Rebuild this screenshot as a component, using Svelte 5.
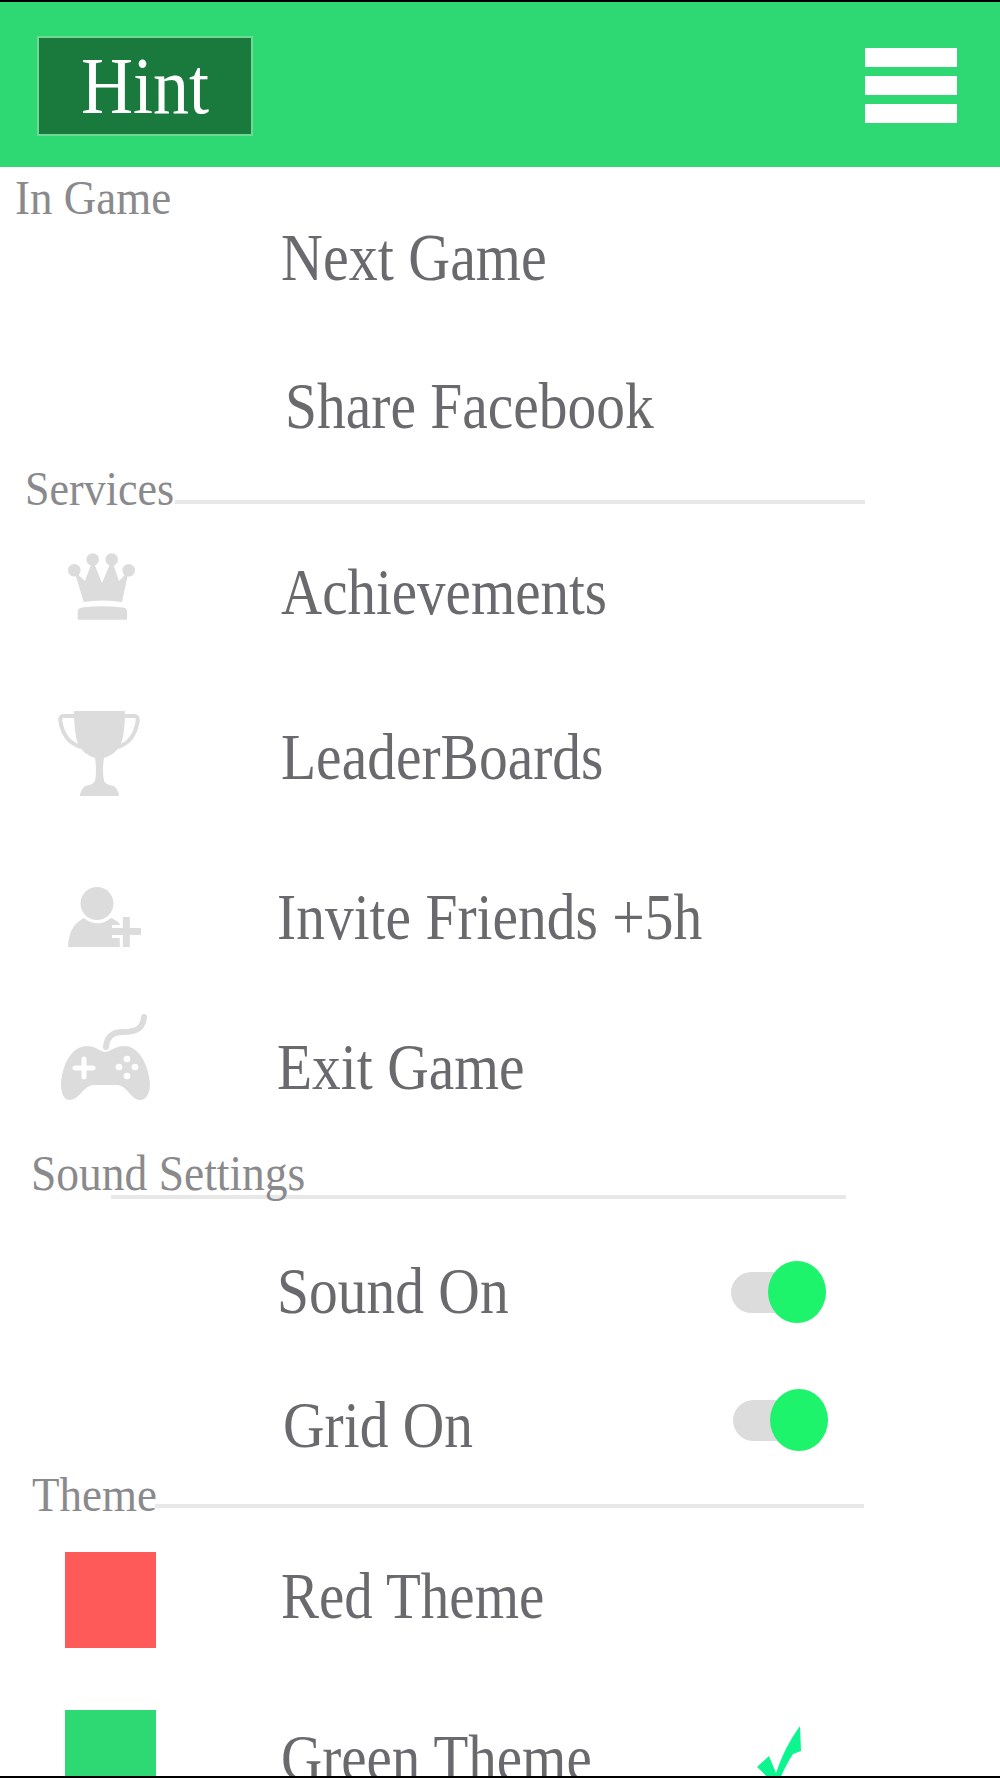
<script>
  const sections = [
    {
      title: 'In Game', h: 62, x: 15,
      rows: [
        { label: 'Next Game', h: 58, dx: 4, size: 58 },
        { label: 'Share Facebook', h: 118, dx: 8, mt: 60 }
      ]
    },
    {
      title: 'Services', h: 50, x: 25, size: 44, rule: { left: 175, width: 690, top: 35 },
      rows: [
        { label: 'Achievements', h: 152, dx: 4, icon: 'crown', size: 57 },
        { label: 'LeaderBoards', h: 180, dx: 4, icon: 'trophy' },
        { label: 'Invite Friends +5h', h: 140, dx: 0, icon: 'invite' },
        { label: 'Exit Game', h: 160, dx: 0, icon: 'pad' }
      ]
    },
    {
      title: 'Sound Settings', h: 52, x: 31, size: 45.500, rule: { left: 111, width: 735, top: 48 },
      rows: [
        { label: 'Sound On', h: 184, dx: 0, toggle: 174, lift: -2 },
        { label: 'Grid On', h: 84, dx: 6, toggle: 172, lift: 9 }
      ]
    },
    {
      title: 'Theme', h: 56, x: 32, rule: { left: 155, width: 709, top: 37 },
      rows: [
        { label: 'Red Theme', h: 144, dx: 4, swatch: 'red', size: 57 },
        { label: 'Green Theme', h: 180, dx: 4, swatch: 'green', checked: true, size: 57 }
      ]
    }
  ];
</script>

<div class="page">
  <header class="topbar">
    <button class="hint"><span>Hint</span></button>
    <div class="burger">
      <span></span>
      <span></span>
      <span></span>
    </div>
  </header>

  {#each sections as section}
    <div class="head" style="height:{section.h}px; padding-left:{section.x}px">
      <span class="head-text" style="font-size:{section.size ?? 45}px">{section.title}</span>
      {#if section.rule}
        <div
          class="rule"
          style="left:{section.rule.left}px; width:{section.rule.width}px; top:{section.rule.top}px"
        ></div>
      {/if}
    </div>

    {#each section.rows as row}
      <div class="row" style="height:{row.h}px; margin-top:{row.mt ?? 0}px">
        <div class="slot">
          {#if row.icon === 'crown'}
            <svg class="icon crown" width="67" height="67" viewBox="0 0 67 67">
              <circle cx="6.300" cy="17.300" r="6.300" />
              <circle cx="24.700" cy="6.500" r="6.300" />
              <circle cx="43.700" cy="6.500" r="6.300" />
              <circle cx="60.700" cy="17.300" r="6.300" />
              <path d="M6.300 18 L17 28 L24.700 7 L34 30 L43.700 7 L51 28 L60.700 18 L54 49 Q34 46 15.700 49 Z" />
              <path d="M9.700 66.700 V58 Q10 55 14 54.500 Q34 52 55 54.500 Q59 55 59 58 V66.700 Z" />
            </svg>
          {:else if row.icon === 'trophy'}
            <svg class="icon trophy" width="82" height="85" viewBox="0 0 82 85">
              <path
                d="M16 0 H67 Q67 22 63 33 Q58 43 46 47 Q44 60 46 70 Q48 74 56 75 Q61 80 61 85 H22 Q22 80 27 75 Q35 74 37 70 Q39 60 37 47 Q25 43 20 33 Q16 22 16 0 Z"
              />
              <path class="line" d="M17 5 H5 Q1.500 5 2.500 11 Q6 31 23 36" />
              <path class="line" d="M66 5 H77 Q80.500 5 79.500 11 Q76 31 60 36" />
            </svg>
          {:else if row.icon === 'invite'}
            <svg class="icon invite" width="73" height="60" viewBox="0 0 73 60">
              <circle cx="29" cy="16.500" r="16.500" />
              <path d="M0 60 C1 44 6 36 16 31 C24 38 35 38 43 31 C48 33 52 36 54 40 V60 Z" />
              <path class="gap" d="M44 44.500 H52 M58.300 32 V60" />
              <path class="plus" d="M44 44.500 H73 M58.300 30 V60" />
            </svg>
          {:else if row.icon === 'pad'}
            <svg class="icon pad" width="89" height="86" viewBox="0 0 89 86">
              <path class="cord" d="M45 33 C46 22 52 18 62 18 C76 18 82 14 83 3" />
              <path
                d="M9 86 C2 86 0 78 0 70 C1 52 10 32 26 32 C35 32 38 37 44 38 C50 37 54 32 64 32 C78 32 88 52 89 70 C89 78 86 86 79 86 C70 86 66 71 56 71 H33 C23 71 18 86 9 86 Z"
              />
              <path class="dpad" d="M14 54 H32 M23 45 V63" />
              <circle class="dot" cx="66" cy="45" r="3.300" />
              <circle class="dot" cx="58" cy="53" r="3.300" />
              <circle class="dot" cx="74" cy="53" r="3.300" />
              <circle class="dot" cx="66" cy="62" r="3.300" />
            </svg>
          {:else if row.swatch}
            <div class="swatch {row.swatch}"></div>
          {/if}
        </div>

        <span class="label" style="margin-left:{row.dx}px; font-size:{row.size ?? 57.500}px">{row.label}</span>

        {#if row.toggle}
          <div class="toggle" style="margin-right:{row.toggle}px; margin-bottom:{row.lift}px">
            <div class="knob"></div>
          </div>
        {/if}

        {#if row.checked}
          <svg class="check" width="45" height="62" viewBox="0 0 45 62">
            <path d="M0 41 L12 30 L19 47 Q28 20 43 0 L44 25 L36 28 Q28 40 19 62 Q10 50 0 41 Z" />
          </svg>
        {/if}
      </div>
    {/each}
  {/each}
</div>

<style>
  :global(body) {
    margin: 0;
    background: #fff;
  }
  .page {
    box-sizing: border-box;
    width: 1000px;
    height: 1778px;
    overflow: hidden;
    background: #fff;
    border-top: 2px solid #000;
    border-bottom: 2px solid #000;
    font-family: 'Liberation Serif', 'Times New Roman', serif;
  }
  .topbar {
    box-sizing: border-box;
    height: 165px;
    display: flex;
    align-items: flex-start;
    justify-content: space-between;
    padding: 34px 43px 0 37px;
    background: #2ed872;
  }
  .hint {
    box-sizing: border-box;
    width: 216px;
    height: 100px;
    padding: 0;
    border: 2px solid #6fd893;
    background: #1a7a3e;
    color: #fff;
    font-family: inherit;
    font-size: 72px;
    line-height: 1;
  }
  .hint span {
    display: block;
    transform: scaleY(1.12);
  }
  .burger {
    display: flex;
    flex-direction: column;
    gap: 9px;
    width: 92px;
    padding-top: 12px;
  }
  .burger span {
    display: block;
    height: 19px;
    background: #fff;
  }
  .head {
    position: relative;
    box-sizing: border-box;
    display: flex;
    align-items: center;
    color: #8a8a8c;
  }
  .head-text {
    position: relative;
    z-index: 1;
    line-height: 1;
    transform: scaleY(1.1);
    white-space: nowrap;
  }
  .rule {
    position: absolute;
    height: 4px;
    background: #e8e8e8;
  }
  .row {
    display: flex;
    align-items: center;
  }
  .slot {
    flex: none;
    display: flex;
    align-items: center;
    width: 277px;
  }
  .label {
    color: #6a6a6e;
    line-height: 1;
    transform: translateY(0.5px) scaleY(1.15);
    white-space: nowrap;
  }
  .icon {
    display: block;
    fill: #dcdcdc;
  }
  .crown {
    margin: 0 0 10px 68px;
  }
  .trophy {
    margin: 0 0 8px 58px;
  }
  .invite {
    margin-left: 68px;
  }
  .pad {
    margin: 0 0 20px 61px;
  }
  .line {
    fill: none;
    stroke: #dcdcdc;
    stroke-width: 4;
  }
  .gap {
    fill: none;
    stroke: #fff;
    stroke-width: 13;
  }
  .plus {
    fill: none;
    stroke: #dcdcdc;
    stroke-width: 7;
  }
  .cord {
    fill: none;
    stroke: #dcdcdc;
    stroke-width: 6;
    stroke-linecap: round;
  }
  .dpad {
    fill: none;
    stroke: #fff;
    stroke-width: 5;
    stroke-linecap: round;
  }
  .dot {
    fill: #fff;
  }
  .swatch {
    width: 91px;
    height: 96px;
    margin-left: 64.500px;
  }
  .swatch.red {
    margin-top: 10px;
    background: #ff5a5a;
  }
  .swatch.green {
    margin-top: 2px;
    background: #2ed872;
  }
  .toggle {
    position: relative;
    width: 95px;
    height: 41px;
    margin-left: auto;
    background: #dcdcdc;
    border-radius: 21px;
  }
  .knob {
    position: absolute;
    right: 0;
    top: -11px;
    width: 58px;
    height: 62px;
    border-radius: 50%;
    background: #1df46b;
  }
  .check {
    margin-left: auto;
    margin-right: 198px;
    fill: #0cf58f;
  }
</style>
